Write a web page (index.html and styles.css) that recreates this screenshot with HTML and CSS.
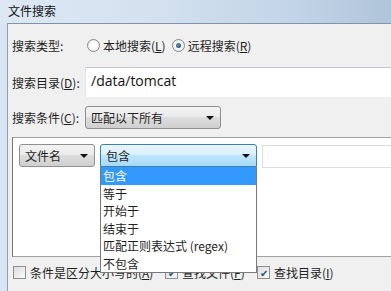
FILE: index.html
```html
<!DOCTYPE html>
<html lang="zh-CN">

<head>
    <meta charset="UTF-8">
    <title>文件搜索</title>
    <link rel="stylesheet" href="styles.css">
</head>

<body>
    <div class="window">
        <div class="titlebar">文件搜索</div>

        <div class="dialog">
            <!-- 搜索类型 -->
            <div class="row row-type">
                <span class="label">搜索类型:</span>
                <label class="radio-item">
                    <span class="radio"></span>本地搜索(<u>L</u>)
                </label>
                <label class="radio-item">
                    <span class="radio checked"></span>远程搜索(<u>R</u>)
                </label>
            </div>

            <!-- 搜索目录 -->
            <div class="row row-dir">
                <span class="label">搜索目录(<u>D</u>):</span>
                <div class="path-input">/data/tomcat</div>
            </div>

            <!-- 搜索条件 -->
            <div class="row row-cond">
                <span class="label">搜索条件(<u>C</u>):</span>
                <div class="select select-cond">匹配以下所有<span class="arrow"></span></div>
            </div>

            <div class="group">
                <div class="crit">
                    <div class="select select-field">文件名<span class="arrow"></span></div>
                    <div class="combo">
                        <div class="select select-open">包含<span class="arrow"></span></div>
                        <ul class="droplist">
                            <li class="active">包含</li>
                            <li>等于</li>
                            <li>开始于</li>
                            <li>结束于</li>
                            <li>匹配正则表达式 (regex)</li>
                            <li>不包含</li>
                        </ul>
                    </div>
                    <div class="value-input"></div>
                </div>
            </div>

            <div class="checks">
                <label class="check-item check-case">
                    <span class="checkbox"></span>条件是区分大小写的(<u>A</u>)
                </label>
                <label class="check-item check-file">
                    <span class="checkbox checked">✔</span>查找文件(<u>F</u>)
                </label>
                <label class="check-item">
                    <span class="checkbox checked">✔</span>查找目录(<u>I</u>)
                </label>
            </div>
        </div>
    </div>
</body>

</html>
```

FILE: styles.css
```css
body {
    margin: 0;
    width: 391px;
    height: 291px;
    overflow: hidden;
    font-family: "Noto Sans CJK SC", "Noto Sans", sans-serif;
    font-size: 12px;
    color: #1e1e1e;
}

u {
    text-decoration: underline;
    text-underline-offset: 1px;
}

.window {
    display: flex;
    flex-direction: column;
    height: 291px;
    background: linear-gradient(to right, #d9e5f2, #c9d9ea 50%, #b4c7dc);
}

/* 标题栏 */
.titlebar {
    height: 23px;
    line-height: 22px;
    padding-left: 8px;
    font-size: 12px;
    color: #111;
    background: linear-gradient(to right, #dde8f4, #d3e1ef 40%, #c2d4e7 75%, #b0c4da);
}

.dialog {
    flex: 1;
    margin-left: 7px;
    border-left: 1px solid #8fa2b8;
    border-top: 1px solid #8293a8;
    background: #f0f0f0;
    display: flex;
    flex-direction: column;
}

.row {
    display: flex;
    align-items: center;
    padding-left: 4px;
}

.label {
    width: 73px;
    flex-shrink: 0;
}

.row-type {
    height: 43px;
}

.radio-item {
    display: flex;
    align-items: center;
    margin-left: 2px;
    margin-right: 4px;
}

.radio {
    width: 11px;
    height: 11px;
    border: 1px solid #8a8a8a;
    border-radius: 50%;
    background: radial-gradient(circle, #ffffff 30%, #dcdcdc 100%);
    margin-right: 3px;
    position: relative;
}

.radio.checked::after {
    content: "";
    position: absolute;
    left: 3px;
    top: 3px;
    width: 5px;
    height: 5px;
    border-radius: 50%;
    background: radial-gradient(circle at 40% 40%, #6a8fb0, #1c3f5e);
}

.row-dir {
    height: 30px;
}

.path-input {
    flex: 1;
    height: 29px;
    line-height: 26px;
    padding-left: 5px;
    background: #fff;
    border-top: 1px solid #c2c6cc;
    border-left: 1px solid #e2e3ea;
    font-family: "Open Sans", "Noto Sans", sans-serif;
    font-size: 14px;
    color: #111;
}

.row-cond {
    height: 40px;
}

/* 下拉框 */
.select {
    position: relative;
    box-sizing: border-box;
    height: 23px;
    line-height: 21px;
    padding-left: 5px;
    border: 1px solid #8e8f8f;
    border-radius: 3px;
    background: linear-gradient(to bottom, #f3f3f3, #ebebeb 45%, #dddddd 50%, #cfcfcf);
}

.arrow {
    position: absolute;
    right: 6px;
    top: 9px;
    border-left: 4px solid transparent;
    border-right: 4px solid transparent;
    border-top: 4px solid #111;
}

.select-cond {
    width: 136px;
}

.group {
    height: 120px;
    margin-left: 4px;
    border: 1px solid #a0a0a0;
    border-left-color: #7a7a7a;
    border-right: none;
    background: #fff;
    padding: 6px 0 0 6px;
    box-sizing: border-box;
}

.crit {
    display: flex;
    gap: 5px;
}

.select-field {
    width: 76px;
}

.combo {
    position: relative;
}

.select-open {
    width: 157px;
    border-color: #3c7fb1;
    border-radius: 3px 3px 0 0;
    background: linear-gradient(to bottom, #eaf6fd, #d9f0fc 45%, #bee6fd 50%, #a7d9f5);
}

.droplist {
    position: absolute;
    top: 23px;
    left: 0;
    z-index: 2;
    width: 157px;
    box-sizing: border-box;
    margin: 0;
    padding: 0;
    list-style: none;
    background: #fff;
    border: 1px solid #7a7a7a;
    border-top: none;
}

.droplist li {
    height: 17.5px;
    line-height: 17px;
    padding-left: 2px;
}

.droplist li.active {
    background: #3399ff;
    color: #fff;
}

.value-input {
    flex: 1;
    height: 23px;
    margin-top: 1px;
    border: 1px solid #dedede;
    border-right: none;
    box-sizing: border-box;
}

/* 复选框 */
.checks {
    display: flex;
    align-items: center;
    height: 30px;
    padding-left: 5px;
}

.check-item {
    display: flex;
    align-items: center;
}

.check-case {
    width: 152px;
}

.check-file {
    width: 92px;
}

.checkbox {
    width: 11px;
    height: 11px;
    border: 1px solid #8f8f8f;
    background: linear-gradient(135deg, #dcdcdc, #fbfbfb);
    margin-right: 4px;
    font-size: 10px;
    line-height: 11px;
    text-align: center;
    color: #2a4f7a;
}
```
